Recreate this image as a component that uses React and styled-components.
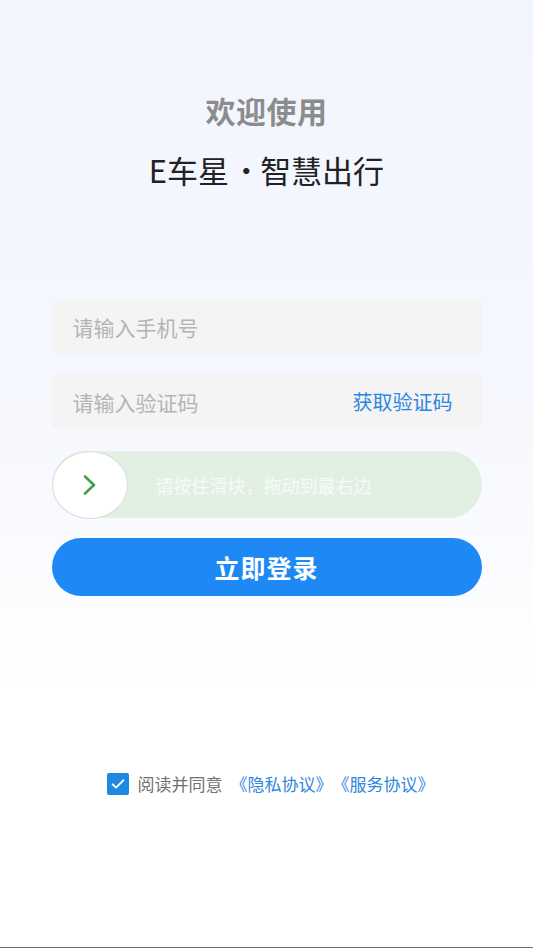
import styled, { createGlobalStyle } from "styled-components";

//------- global --------
const GlobalStyle = createGlobalStyle`
  html, body {
    margin: 0;
    padding: 0;
  }
  body {
    font-family: "Noto Sans CJK SC", "Noto Sans", sans-serif;
  }
`;

const App = () => {
  return (
    <>
      <GlobalStyle />
      <Page>
        <Header>
          <Welcome>欢迎使用</Welcome>
          <Brand>
            E车星<Dot>•</Dot>智慧出行
          </Brand>
        </Header>
        <Form>
          <Field>
            <Placeholder>请输入手机号</Placeholder>
          </Field>
          <Field>
            <Placeholder>请输入验证码</Placeholder>
            <CodeLink>获取验证码</CodeLink>
          </Field>
          <Slider>
            <Knob>
              <svg width="24" height="24" viewBox="0 0 24 24" fill="none">
                <path
                  d="M8 3.5l9 8.5-9 8.5"
                  stroke="#43a047"
                  strokeWidth="2.6"
                  strokeLinecap="round"
                  strokeLinejoin="round"
                />
              </svg>
            </Knob>
            <SliderText>请按住滑块，拖动到最右边</SliderText>
          </Slider>
          <LoginButton>立即登录</LoginButton>
        </Form>
        <Agreement>
          <Check>
            <svg width="16" height="16" viewBox="0 0 24 24" fill="none">
              <path
                d="M4 12.5l5 5L20 6.5"
                stroke="#fff"
                strokeWidth="3"
                strokeLinecap="round"
                strokeLinejoin="round"
              />
            </svg>
          </Check>
          <AgreeText>阅读并同意</AgreeText>
          <Link>《隐私协议》</Link>
          <Link>《服务协议》</Link>
        </Agreement>
      </Page>
    </>
  );
};

const Page = styled.div`
  width: 533px;
  height: 948px;
  box-sizing: border-box;
  border-bottom: 1px solid #6e6e6e;
  background: linear-gradient(180deg, #f1f5fe 0%, #f6f8fe 45%, #ffffff 72%);
  display: flex;
  flex-direction: column;
  align-items: center;
  overflow: hidden;
`;

const Header = styled.div`
  display: flex;
  flex-direction: column;
  align-items: center;
  padding-top: 88px;
`;

const Welcome = styled.h1`
  margin: 0;
  font-size: 30px;
  line-height: 44px;
  font-weight: 700;
  color: #8c8c8c;
  letter-spacing: 0.5px;
`;

const Brand = styled.h2`
  margin: 15px 0 0;
  font-size: 31px;
  line-height: 46px;
  font-weight: 400;
  color: #222;
`;

const Dot = styled.span`
  display: inline-block;
  margin: 0 2px 0 5px;
  font-size: 24px;
  font-weight: 700;
  vertical-align: 3px;
`;

const Form = styled.div`
  width: 430px;
  margin-top: 106px;
  display: flex;
  flex-direction: column;
`;

const Field = styled.div`
  height: 55px;
  border-radius: 6px;
  background: #f4f4f5;
  display: flex;
  align-items: center;
  justify-content: space-between;
  padding: 0 29px 0 21px;
  margin-bottom: 20px;
`;

const Placeholder = styled.span`
  font-size: 21px;
  color: #b4b4b4;
`;

const CodeLink = styled.span`
  font-size: 20px;
  color: #2f86e0;
`;

const Slider = styled.div`
  height: 67px;
  margin-top: 2px;
  border-radius: 34px;
  background: #e1f0e3;
  display: flex;
  align-items: center;
`;

const Knob = styled.div`
  width: 76px;
  height: 68px;
  box-sizing: border-box;
  border-radius: 50%;
  background: #fff;
  border: 1px solid #dcdcdc;
  display: flex;
  align-items: center;
  justify-content: center;
  padding-right: 2px;
`;

const SliderText = styled.span`
  margin-left: 28px;
  font-size: 18px;
  color: #f7fbf7;
`;

const LoginButton = styled.button`
  margin-top: 20px;
  height: 58px;
  border: none;
  border-radius: 29px;
  background: #1e88f5;
  color: #fff;
  font-family: "Noto Sans CJK SC", sans-serif;
  font-size: 25px;
  font-weight: 700;
  letter-spacing: 1px;
`;

const Agreement = styled.div`
  margin-top: 175px;
  padding-left: 8px;
  display: flex;
  align-items: center;
`;

const Check = styled.div`
  width: 22px;
  height: 22px;
  border-radius: 2px;
  background: #1e88e5;
  display: flex;
  align-items: center;
  justify-content: center;
  margin-right: 9px;
`;

const AgreeText = styled.span`
  font-size: 17px;
  color: #707070;
  margin-right: 8px;
`;

const Link = styled.span`
  font-size: 17px;
  color: #2f86e0;
`;

export default App;
